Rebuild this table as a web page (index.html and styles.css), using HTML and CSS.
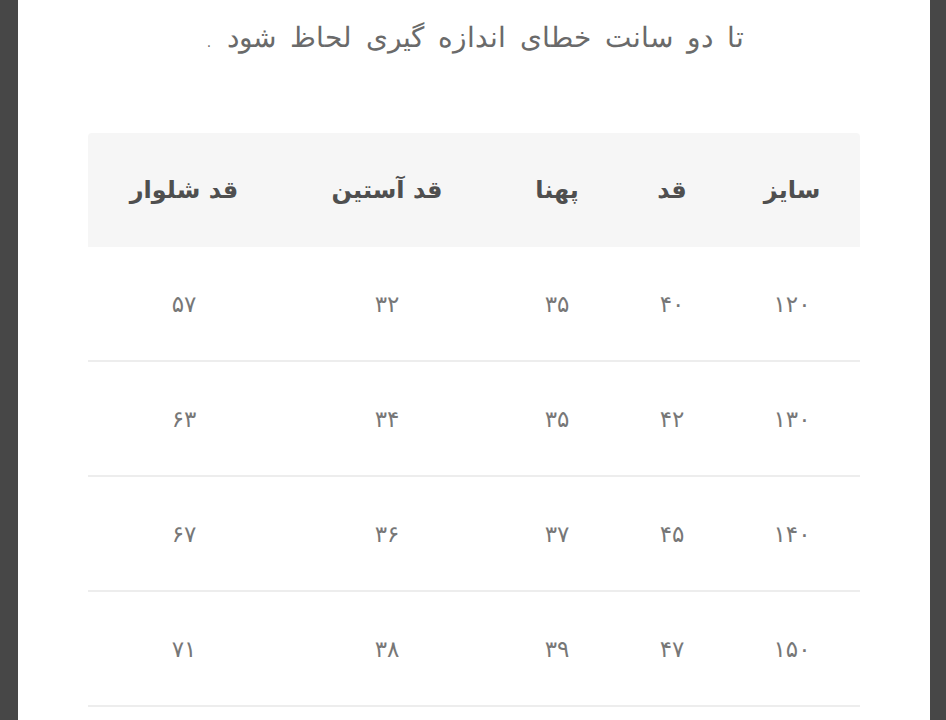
FILE: index.html
```html
<!DOCTYPE html>
<html lang="fa" dir="rtl">
<head>
<meta charset="utf-8">
<link rel="stylesheet" href="styles.css">
</head>
<body>
<div class="page">
  <p class="note">تا دو سانت خطای اندازه گیری لحاظ شود .</p>
  <table class="sizes">
    <colgroup>
      <col class="c1"><col class="c2"><col class="c3"><col class="c4"><col class="c5">
    </colgroup>
    <thead>
      <tr><th>سایز</th><th>قد</th><th>پهنا</th><th>قد آستین</th><th>قد شلوار</th></tr>
    </thead>
    <tbody>
      <tr><td>۱۲۰</td><td>۴۰</td><td>۳۵</td><td>۳۲</td><td>۵۷</td></tr>
      <tr><td>۱۳۰</td><td>۴۲</td><td>۳۵</td><td>۳۴</td><td>۶۳</td></tr>
      <tr><td>۱۴۰</td><td>۴۵</td><td>۳۷</td><td>۳۶</td><td>۶۷</td></tr>
      <tr><td>۱۵۰</td><td>۴۷</td><td>۳۹</td><td>۳۸</td><td>۷۱</td></tr>
    </tbody>
  </table>
</div>
</body>
</html>
```
FILE: styles.css
```css
html, body {
  margin: 0;
  padding: 0;
  height: 100%;
  overflow: hidden;
}
body {
  background: #474747;
  font-family: "DejaVu Sans", "Noto Sans", sans-serif;
}
.page {
  margin: 0 16px 0 18px;
  background: #ffffff;
  min-height: 100%;
  padding: 0 70px;
  overflow: hidden;
}
.note {
  margin: 18px 0 0 0;
  text-align: center;
  font-size: 28px;
  line-height: 40px;
  font-weight: 300;
  word-spacing: 5px;
  color: #6a6a6a;
}
.sizes {
  margin-top: 75px;
  width: 772px;
  border-collapse: collapse;
  table-layout: fixed;
}
.c1 { width: 136px; }
.c2 { width: 104px; }
.c3 { width: 126px; }
.c4 { width: 214px; }
.c5 { width: 192px; }
.sizes th {
  background: #f6f6f6;
  height: 114px;
  padding: 0;
  text-align: center;
  font-size: 24px;
  font-weight: bold;
  color: #4f4f4f;
}
.sizes thead tr th:first-child { border-top-right-radius: 4px; }
.sizes thead tr th:last-child { border-top-left-radius: 4px; }
.sizes td {
  height: 113px;
  padding: 0;
  text-align: center;
  font-size: 23px;
  color: #777777;
  border-bottom: 2px solid #ededed;
}
```
